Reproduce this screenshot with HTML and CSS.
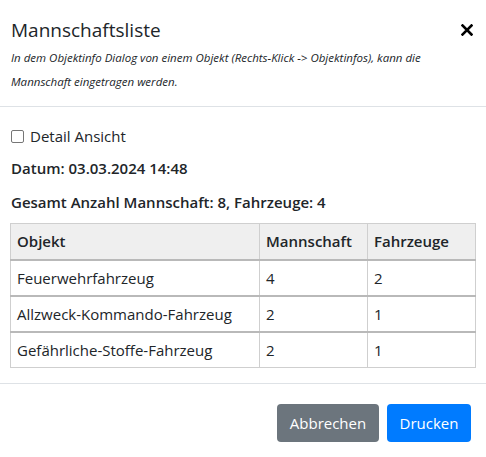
FILE: index.html
```html
<!DOCTYPE html>
<html lang="de">
<head>
<meta charset="utf-8">
<link rel="stylesheet" href="styles.css">
</head>
<body>
<div class="modal">
  <div class="header">
    <div class="header-top">
      <h5 class="title">Mannschaftsliste</h5>
      <button class="close" aria-label="Schließen">
        <svg width="12" height="12" viewBox="0 0 12 12"><path d="M1.5 1.5 L10.5 10.5 M10.5 1.5 L1.5 10.5" stroke="#000" stroke-width="2.6" stroke-linecap="square"/></svg>
      </button>
    </div>
    <p class="hint">In dem Objektinfo Dialog von einem Objekt (Rechts-Klick -&gt; Objektinfos), kann die Mannschaft eingetragen werden.</p>
  </div>
  <div class="body">
    <label class="check"><span class="box"></span>Detail Ansicht</label>
    <p class="strong datum">Datum: 03.03.2024 14:48</p>
    <p class="strong total">Gesamt Anzahl Mannschaft: 8, Fahrzeuge: 4</p>
    <table class="table">
      <thead>
        <tr><th class="c1">Objekt</th><th class="c2">Mannschaft</th><th class="c3">Fahrzeuge</th></tr>
      </thead>
      <tbody>
        <tr><td>Feuerwehrfahrzeug</td><td>4</td><td>2</td></tr>
        <tr><td>Allzweck-Kommando-Fahrzeug</td><td>2</td><td>1</td></tr>
        <tr><td>Gefährliche-Stoffe-Fahrzeug</td><td>2</td><td>1</td></tr>
      </tbody>
    </table>
  </div>
  <div class="footer">
    <button class="btn btn-gray">Abbrechen</button>
    <button class="btn btn-blue">Drucken</button>
  </div>
</div>
</body>
</html>
```

FILE: styles.css
```css
* { box-sizing: border-box; }
html, body { margin: 0; padding: 0; background: #fff; }
body {
  font-family: "Open Sans", "Noto Sans", sans-serif;
  color: #212529;
  font-size: 15px;
}
.modal { width: 486px; }
.header {
  padding: 15px 13px 12px 11px;
  border-bottom: 1px solid #dee2e6;
}
.header-top {
  display: flex;
  justify-content: space-between;
  align-items: center;
}
.title {
  margin: 0;
  font-size: 19px;
  font-weight: 400;
  line-height: 30px;
}
.close {
  border: 0;
  background: none;
  padding: 0;
  width: 12px;
  height: 12px;
  display: flex;
}
.hint {
  margin: 1px 30px 0 0;
  font-size: 11.5px;
  font-style: italic;
  line-height: 24px;
}
.body { padding: 18px 10px 15px 10px; }
.check {
  display: flex;
  align-items: center;
  gap: 6px;
  font-size: 15px;
  line-height: 22px;
  padding-left: 1px;
}
.box {
  width: 13px;
  height: 13px;
  border: 1.5px solid #767676;
  border-radius: 2px;
  display: inline-block;
}
.strong {
  margin: 0;
  font-weight: 600;
  font-size: 15px;
  line-height: 20px;
  padding-left: 1px;
}
.datum { margin-top: 11px; }
.total { margin-top: 14px; }
.table {
  margin-top: 11px;
  width: 466px;
  border-collapse: collapse;
  font-size: 15px;
}
.table th, .table td {
  border: 1px solid #cfcfcf;
  padding: 6px 6px;
  text-align: left;
  height: 36px;
  line-height: 22px;
}
.table tbody tr:last-child td { height: 35px; }
.table th {
  background: #efefef;
  font-weight: 600;
  border-bottom: 2px solid #b9b9b9;
}
.table tbody tr + tr td { border-top: 2px solid #b9b9b9; }
.c1 { width: 249px; }
.c2 { width: 108px; }
.c3 { width: 108px; }
.footer {
  border-top: 1px solid #dee2e6;
  display: flex;
  justify-content: flex-end;
  gap: 8px;
  padding: 20px 15px 15px 10px;
}
.btn {
  font-family: inherit;
  font-size: 15px;
  color: #fff;
  border: 0;
  border-radius: 4px;
  height: 38px;
  padding: 0 12px;
}
.btn-gray { background: #6c757d; width: 102px; }
.btn-blue { background: #007bff; width: 84px; }
```
